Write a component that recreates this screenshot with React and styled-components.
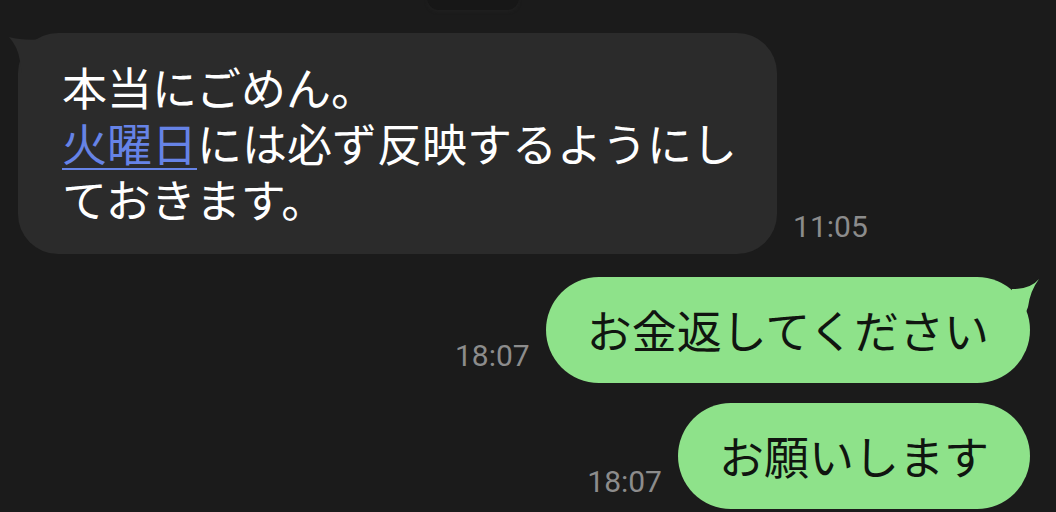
import React from "react";
import styled, { createGlobalStyle } from "styled-components";

const GlobalStyle = createGlobalStyle`
  html, body {
    margin: 0;
    padding: 0;
    background: #1b1b1b;
  }
  body {
    font-family: "Noto Sans CJK JP", "Noto Sans", sans-serif;
  }
`;

const Screen = styled.div`
  width: 1056px;
  height: 512px;
  overflow: hidden;
  background: #1b1b1b;
  display: flex;
  flex-direction: column;
  padding: 0 26px 0 18px;
  box-sizing: border-box;
`;

const BadgeStrip = styled.div`
  height: 33px;
  display: flex;
  padding-left: 409px;
`;

const DateBadge = styled.div`
  width: 92px;
  height: 24px;
  margin-top: -14px;
  border-radius: 12px;
  background: #171717;
  box-shadow: 0 2px 3px rgba(36, 36, 36, 0.5);
`;

const Row = styled.div`
  display: flex;
  align-items: flex-end;
  gap: 16px;
  justify-content: ${({ $out }) => ($out ? "flex-end" : "flex-start")};
  margin-top: ${({ $gap }) => $gap || 0}px;
`;

const Bubble = styled.div`
  position: relative;
  box-sizing: border-box;
  font-size: 45px;
  line-height: 56px;
  white-space: nowrap;
  background: ${({ $out }) => ($out ? "#8ee28a" : "#2b2b2b")};
  color: ${({ $out }) => ($out ? "#101510" : "#ffffff")};
  border-radius: ${({ $out }) => ($out ? "53px" : "40px")};
  padding: ${({ $out }) => ($out ? "25px 41px" : "26px 40px 27px 44px")};
`;

const Tail = styled.svg`
  position: absolute;
  top: 0;
  width: 40px;
  height: 40px;
  ${({ $out }) => ($out ? "right: -10px;" : "left: -10px;")}
`;

const Link = styled.span`
  color: #6683e6;
  text-decoration: underline;
  text-decoration-thickness: 2px;
  text-underline-offset: 6px;
`;

const Time = styled.span`
  font-family: Roboto, "Liberation Sans", sans-serif;
  font-size: 30px;
  line-height: 30px;
  color: #8c8c8c;
  margin-bottom: 12px;
`;

function InTail() {
  return (
    <Tail viewBox="0 0 40 40">
      <path d="M1 4 Q16 8 36 6 L36 40 L14 40 L12 28 Q10 14 1 4 Z" fill="#2b2b2b" />
    </Tail>
  );
}

function OutTail() {
  return (
    <Tail $out viewBox="0 0 40 40">
      <path d="M39 2 Q31 12 12 12 L12 40 L24 40 L28 30 Q30 14 39 2 Z" fill="#8ee28a" />
    </Tail>
  );
}

export default function App() {
  return (
    <>
      <GlobalStyle />
      <Screen>
        <BadgeStrip>
          <DateBadge />
        </BadgeStrip>
        <Row>
          <Bubble>
            <InTail />
            本当にごめん。
            <br />
            <Link>火曜日</Link>には必ず反映するようにし
            <br />
            ておきます。
          </Bubble>
          <Time>11:05</Time>
        </Row>
        <Row $out $gap={23}>
          <Time>18:07</Time>
          <Bubble $out>
            <OutTail />
            お金返してください
          </Bubble>
        </Row>
        <Row $out $gap={20}>
          <Time>18:07</Time>
          <Bubble $out>お願いします</Bubble>
        </Row>
      </Screen>
    </>
  );
}
